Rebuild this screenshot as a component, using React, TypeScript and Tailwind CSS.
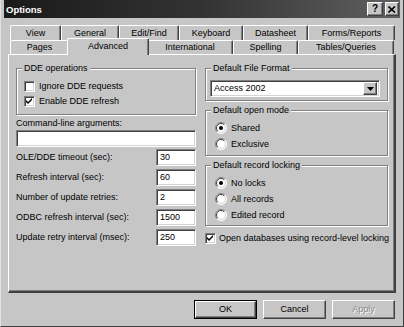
import React from "react";

function Check({ checked }: { checked?: boolean }) {
  return (
    <div className="w-[11px] h-[11px] shrink-0 bg-white border border-t-[#808080] border-l-[#808080] border-b-white border-r-white shadow-[inset_1px_1px_0_#404040,inset_-1px_-1px_0_#d4d4d4] flex items-center justify-center">
      {checked && (
        <svg width="7" height="7" viewBox="0 0 7 7">
          <path d="M0 2 L2 4 L6 0 L6 2 L2 6 L0 4 Z" fill="#000" />
        </svg>
      )}
    </div>
  );
}

function Radio({ checked }: { checked?: boolean }) {
  return (
    <svg width="12" height="12" viewBox="0 0 12 12" className="shrink-0">
      <circle cx="6" cy="6" r="5.5" fill="#fff" />
      <path d="M2.1 9.9 A5.5 5.5 0 0 1 9.9 2.1" stroke="#808080" fill="none" />
      <path d="M9.9 2.1 A5.5 5.5 0 0 1 2.1 9.9" stroke="#ffffff" fill="none" />
      <path d="M2.8 9.2 A4.5 4.5 0 0 1 9.2 2.8" stroke="#404040" fill="none" />
      <path d="M9.2 2.8 A4.5 4.5 0 0 1 2.8 9.2" stroke="#d4d4d4" fill="none" />
      {checked && <circle cx="6" cy="6" r="2" fill="#000" />}
    </svg>
  );
}

function Group({ label, className, children }: { label: string; className: string; children?: React.ReactNode }) {
  return (
    <div className={"relative border border-[#808080] shadow-[inset_1px_1px_0_#fff,1px_1px_0_#fff] " + className}>
      <span className="absolute -top-[6px] left-[5px] bg-[#c6c6c6] px-[2px] leading-[11px] whitespace-nowrap">{label}</span>
      {children}
    </div>
  );
}

function Field({ value, className }: { value?: string; className: string }) {
  return (
    <div className={"bg-white border border-t-[#808080] border-l-[#808080] border-b-white border-r-white shadow-[inset_1px_1px_0_#404040,inset_-1px_-1px_0_#d4d4d4] flex items-center pl-[3px] " + className}>
      {value}
    </div>
  );
}

function Tab({ label, w }: { label: string; w: string }) {
  return (
    <div className={"h-full flex items-center justify-center whitespace-nowrap border-t border-l border-t-white border-l-white border-r border-r-[#404040] shadow-[inset_-1px_0_0_#808080] rounded-t-[2px] " + w}>
      {label}
    </div>
  );
}

function Btn({ label, def, disabled }: { label: string; def?: boolean; disabled?: boolean }) {
  return (
    <div className={"w-[63px] h-[19px] " + (def ? "border border-black" : "")}>
      <div className="w-full h-full border border-t-white border-l-white border-b-[#404040] border-r-[#404040] shadow-[inset_-1px_-1px_0_#808080] flex items-center justify-center">
        <span className={disabled ? "text-[#8a8a8a] [text-shadow:1px_1px_0_#fff]" : ""}>{label}</span>
      </div>
    </div>
  );
}

export default function App() {
  return (
    <div className="w-[404px] h-[327px] bg-[#c6c6c6] font-['Liberation_Sans',Arial,sans-serif] text-[9px] leading-[11px] text-black flex flex-col px-[3px] border-l border-l-[#e0e0e0] border-r border-r-[#404040] border-b border-b-[#404040] overflow-hidden">
      {/* title bar */}
      <div className="h-[18px] shrink-0 bg-[linear-gradient(to_right,#1a1a1a,#333333_50%,#606060)] flex items-center pl-[2px] pr-[1px]">
        <span className="text-white font-bold text-[9.5px] flex-1">Options</span>
        <div className="w-[16px] h-[14px] bg-[#c6c6c6] border border-t-white border-l-white border-b-[#404040] border-r-[#404040] shadow-[inset_-1px_-1px_0_#808080] flex items-center justify-center font-bold text-[10px] leading-none">?</div>
        <div className="w-[14px] h-[14px] ml-[2px] bg-[#c6c6c6] border border-t-white border-l-white border-b-[#404040] border-r-[#404040] shadow-[inset_-1px_-1px_0_#808080] flex items-center justify-center">
          <svg width="8" height="7" viewBox="0 0 8 7">
            <path d="M0.5 0.5 L7 6.5 M7 0.5 L0.5 6.5" stroke="#000" strokeWidth="1.6" />
          </svg>
        </div>
      </div>

      {/* tabs */}
      <div className="mt-[7px] px-[4px] flex flex-col">
        <div className="h-[15px] flex ml-[2px]">
          <Tab label="View" w="w-[51px]" />
          <Tab label="General" w="w-[58px]" />
          <Tab label="Edit/Find" w="w-[60px]" />
          <Tab label="Keyboard" w="w-[64px]" />
          <Tab label="Datasheet" w="w-[65px]" />
          <Tab label="Forms/Reports" w="w-[87px]" />
        </div>
        <div className="h-[14px] flex ml-[2px] relative z-10">
          <Tab label="Pages" w="w-[59px]" />
          <div className="w-[82px] -mx-[2px] -mt-[2px] h-[17px] bg-[#c6c6c6] flex items-start pt-[2px] justify-center border-t border-l border-t-white border-l-white border-r border-r-[#404040] shadow-[inset_-1px_0_0_#808080] rounded-t-[2px] relative z-10">
            Advanced
          </div>
          <Tab label="International" w="w-[86px]" />
          <Tab label="Spelling" w="w-[65px]" />
          <Tab label="Tables/Queries" w="w-[96px]" />
        </div>

        {/* panel */}
        <div className="h-[239px] border-t border-l border-t-white border-l-white border-r-2 border-b-2 border-r-[#404040] border-b-[#404040] shadow-[inset_-1px_-1px_0_#808080] flex pl-[7px] pr-[6px] gap-[9px]">
          {/* left column */}
          <div className="w-[180px] flex flex-col">
            <Group label="DDE operations" className="mt-[13px] h-[47px] flex flex-col pt-[11px] pl-[7px] gap-[3px]">
              <div className="h-[12px] flex items-center gap-[4px]">
                <Check />
                <span>Ignore DDE requests</span>
              </div>
              <div className="h-[12px] flex items-center gap-[4px]">
                <Check checked />
                <span>Enable DDE refresh</span>
              </div>
            </Group>
            <div className="mt-[3px] h-[11px]">Command-line arguments:</div>
            <Field className="mt-[1px] h-[17px] w-[180px]" />
            <div className="mt-[2px] flex flex-col gap-[3px]">
              {[
                ["OLE/DDE timeout (sec):", "30"],
                ["Refresh interval (sec):", "60"],
                ["Number of update retries:", "2"],
                ["ODBC refresh interval (sec):", "1500"],
                ["Update retry interval (msec):", "250"],
              ].map(([l, v]) => (
                <div key={l} className="h-[17px] flex items-center justify-between">
                  <span>{l}</span>
                  <Field value={v} className="w-[40px] h-[17px]" />
                </div>
              ))}
            </div>
          </div>

          {/* right column */}
          <div className="w-[183px] flex flex-col">
            <Group label="Default File Format" className="mt-[13px] h-[33px] pt-[11px] pl-[4px] pr-[7px]">
              <div className="h-[17px] bg-white border border-t-[#808080] border-l-[#808080] border-b-white border-r-white shadow-[inset_1px_1px_0_#404040,inset_-1px_-1px_0_#d4d4d4] flex items-center pl-[3px] pr-[2px]">
                <span className="flex-1">Access 2002</span>
                <div className="w-[14px] h-[13px] bg-[#c6c6c6] border border-t-white border-l-white border-b-[#404040] border-r-[#404040] shadow-[inset_-1px_-1px_0_#808080] flex items-center justify-center">
                  <svg width="7" height="4" viewBox="0 0 7 4">
                    <path d="M0 0 H7 L3.5 4 Z" fill="#000" />
                  </svg>
                </div>
              </div>
            </Group>
            <Group label="Default open mode" className="mt-[9px] h-[46px] flex flex-col pt-[11px] pl-[9px] gap-[4px]">
              <div className="h-[12px] flex items-center gap-[4px]">
                <Radio checked />
                <span>Shared</span>
              </div>
              <div className="h-[12px] flex items-center gap-[4px]">
                <Radio />
                <span>Exclusive</span>
              </div>
            </Group>
            <Group label="Default record locking" className="mt-[9px] h-[61px] flex flex-col pt-[11px] pl-[9px] gap-[4px]">
              <div className="h-[12px] flex items-center gap-[4px]">
                <Radio checked />
                <span>No locks</span>
              </div>
              <div className="h-[12px] flex items-center gap-[4px]">
                <Radio />
                <span>All records</span>
              </div>
              <div className="h-[12px] flex items-center gap-[4px]">
                <Radio />
                <span>Edited record</span>
              </div>
            </Group>
            <div className="mt-[6px] h-[12px] flex items-center gap-[3px] whitespace-nowrap">
              <Check checked />
              <span>Open databases using record-level locking</span>
            </div>
          </div>
        </div>
      </div>

      {/* buttons */}
      <div className="mt-[7px] flex justify-end gap-[6px] pr-[5px]">
        <Btn label="OK" def />
        <Btn label="Cancel" />
        <Btn label="Apply" disabled />
      </div>
    </div>
  );
}
